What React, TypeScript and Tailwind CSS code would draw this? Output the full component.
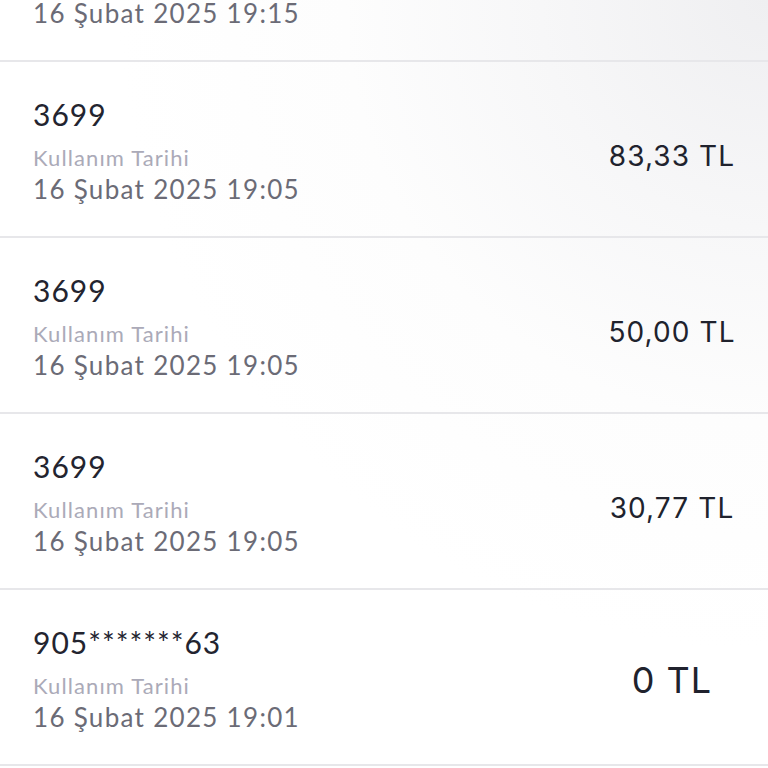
import React from "react";

type Row = { id: string; date: string; amount: string; big?: boolean };

const rows: Row[] = [
  { id: "3699", date: "16 Şubat 2025 19:15", amount: "" },
  { id: "3699", date: "16 Şubat 2025 19:05", amount: "83,33 TL" },
  { id: "3699", date: "16 Şubat 2025 19:05", amount: "50,00 TL" },
  { id: "3699", date: "16 Şubat 2025 19:05", amount: "30,77 TL" },
  { id: "905*******63", date: "16 Şubat 2025 19:01", amount: "0 TL", big: true },
];

export default function App() {
  return (
    <div className="w-[768px] h-[768px] overflow-hidden bg-[radial-gradient(650px_circle_at_100%_0%,#efeff1_0%,#f7f7f8_35%,#fdfdfd_65%,#ffffff_100%)]">
      <div className="-mt-[114px] flex flex-col">
        {rows.map((r, i) => (
          <div
            key={i}
            className="h-[176px] border-b-2 border-[#e7e7ea] flex pl-[33px] pr-[16px]"
          >
            <div className="flex-1 flex flex-col pt-[34px] font-['Lato',sans-serif]">
              <div className="text-[30px] leading-[36px] tracking-[1px] text-[#23242f]">{r.id}</div>
              <div className="text-[22px] leading-[28px] mt-[12px] tracking-[1.1px] text-[#abaab8]">
                Kullanım Tarihi
              </div>
              <div className="text-[26px] leading-[32px] mt-[1px] tracking-[1.3px] text-[#6b6b76]">
                {r.date}
              </div>
            </div>
            <div
              className={
                r.big
                  ? "w-[160px] flex items-center justify-center pt-[6px] font-['Inter',sans-serif] text-[#20222d]"
                  : "w-[160px] flex items-center justify-center pt-[14px] font-['Inter',sans-serif] text-[#20222d]"
              }
            >
              <span
                className={
                  r.big
                    ? "text-[36px] leading-[44px] tracking-[1px]"
                    : "text-[28px] leading-[34px] tracking-[1.1px]"
                }
              >
                {r.amount}
              </span>
            </div>
          </div>
        ))}
      </div>
    </div>
  );
}
